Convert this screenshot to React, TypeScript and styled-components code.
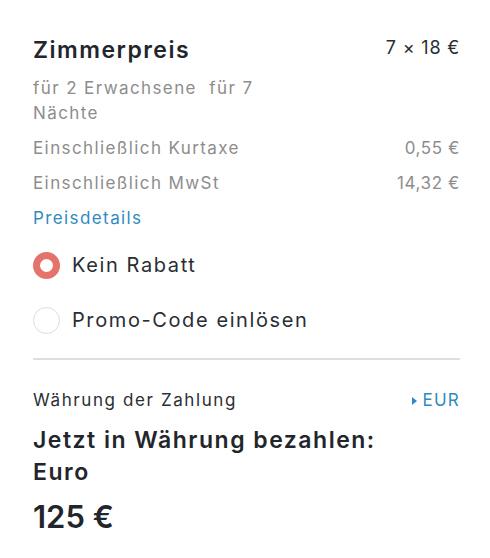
import React from "react";
import styled, { createGlobalStyle } from "styled-components";

const GlobalStyle = createGlobalStyle`
  body {
    margin: 0;
    background: #ffffff;
    font-family: "Inter", "Roboto", sans-serif;
    color: #262a30;
  }
`;

const Panel = styled.div`
  width: 427px;
  padding: 36px 30px 20px 33px;
`;

const HeadRow = styled.div`
  display: flex;
  justify-content: space-between;
  align-items: flex-start;
`;

const HeadLeft = styled.div`
  display: flex;
  flex-direction: column;
  width: 250px;
`;

const Title = styled.h2`
  margin: 0;
  font-size: 23px;
  line-height: 28px;
  font-weight: 600;
  letter-spacing: 1.5px;
  color: #22262c;
`;

const Multiplier = styled.span`
  font-size: 18px;
  line-height: 24px;
  letter-spacing: 0.8px;
  color: #2a2e33;
`;

const Muted = styled.div`
  margin-top: 12px;
  font-size: 17px;
  line-height: 25px;
  letter-spacing: 1.4px;
  color: #8d8d8d;
`;

const LineRow = styled.div`
  display: flex;
  justify-content: space-between;
  margin-top: 10px;
  font-size: 17px;
  line-height: 25px;
  letter-spacing: 1.4px;
  color: #8d8d8d;
`;

const Amount = styled.span`
  letter-spacing: 0.6px;
`;

const Link = styled.a`
  display: inline-block;
  margin-top: 10px;
  font-size: 17px;
  line-height: 25px;
  letter-spacing: 1.4px;
  color: #2f8bbf;
  text-decoration: none;
`;

const Options = styled.div`
  display: flex;
  flex-direction: column;
  gap: 27px;
  margin-top: 20px;
`;

const Option = styled.label`
  display: flex;
  align-items: center;
  gap: 12px;
  font-size: 20px;
  line-height: 28px;
  letter-spacing: 1.6px;
  color: #2a2e33;
`;

const Radio = styled.span<{ checked?: boolean }>`
  box-sizing: border-box;
  width: 27px;
  height: 27px;
  border-radius: 50%;
  flex-shrink: 0;
  background: #fff;
  border: ${({ checked }) => (checked ? "7px solid #e5736b" : "1.5px solid #dcdcdc")};
`;

const Divider = styled.hr`
  margin: 24px 0 0;
  border: none;
  border-top: 2px solid #dedede;
`;

const CurrencyRow = styled.div`
  display: flex;
  justify-content: space-between;
  align-items: center;
  margin-top: 28px;
  font-size: 17px;
  line-height: 25px;
  letter-spacing: 1.6px;
  color: #2a2e33;
`;

const CurrencyLink = styled.span`
  display: flex;
  align-items: center;
  gap: 6px;
  letter-spacing: 1.2px;
  color: #2f8bbf;
`;

const PayTitle = styled.h3`
  margin: 11px 0 0;
  font-size: 23px;
  line-height: 32px;
  font-weight: 600;
  letter-spacing: 1.5px;
  color: #22262c;
`;

const Total = styled.div`
  margin-top: 9px;
  font-size: 31px;
  line-height: 40px;
  font-weight: 600;
  color: #22262c;
`;

const App: React.FC = (): React.ReactElement => {
  return (
    <>
      <GlobalStyle />
      <Panel>
        <HeadRow>
          <HeadLeft>
            <Title>Zimmerpreis</Title>
            <Muted>für 2 Erwachsene&nbsp; für 7 Nächte</Muted>
          </HeadLeft>
          <Multiplier>7 × 18 €</Multiplier>
        </HeadRow>
        <LineRow>
          <span>Einschließlich Kurtaxe</span>
          <Amount>0,55 €</Amount>
        </LineRow>
        <LineRow>
          <span>Einschließlich MwSt</span>
          <Amount>14,32 €</Amount>
        </LineRow>
        <Link href="#">Preisdetails</Link>
        <Options>
          <Option>
            <Radio checked />
            Kein Rabatt
          </Option>
          <Option>
            <Radio />
            Promo-Code einlösen
          </Option>
        </Options>
        <Divider />
        <CurrencyRow>
          <span>Währung der Zahlung</span>
          <CurrencyLink>
            <svg width="5" height="8" viewBox="0 0 5 8">
              <path d="M0 0 L5 4 L0 8 Z" fill="#2f8bbf" />
            </svg>
            EUR
          </CurrencyLink>
        </CurrencyRow>
        <PayTitle>
          Jetzt in Währung bezahlen:
          <br />
          Euro
        </PayTitle>
        <Total>125 €</Total>
      </Panel>
    </>
  );
};

export default App;
